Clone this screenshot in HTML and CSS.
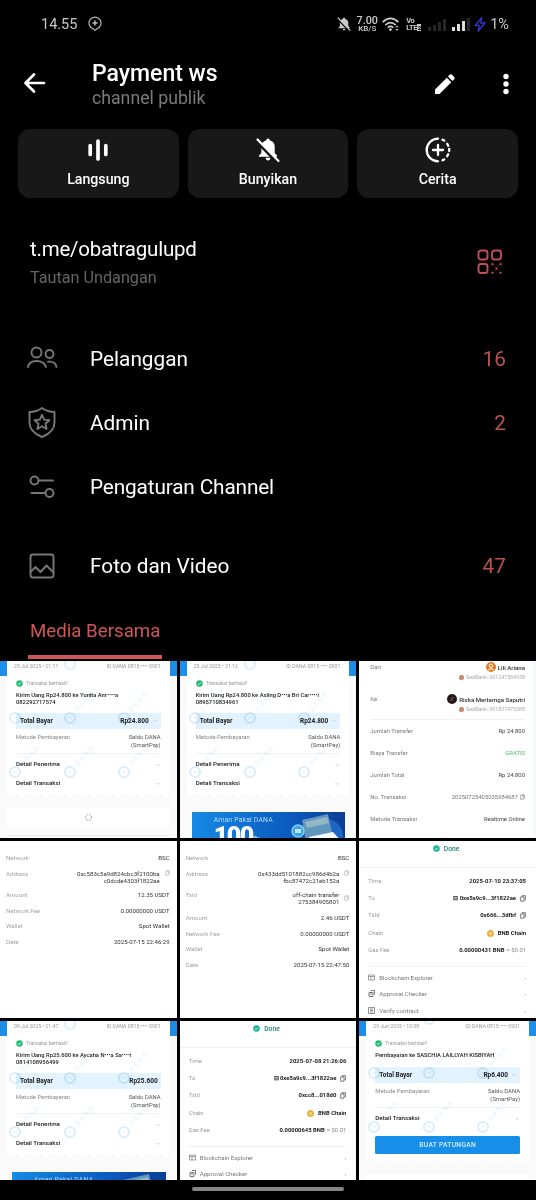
FILE: index.html
```html
<!DOCTYPE html>
<html lang="id">
<head>
<meta charset="utf-8">
<title>Payment ws</title>
<link rel="stylesheet" href="styles.css">
</head>
<body>
<svg width="0" height="0" class="defs">
  <symbol id="chev" viewBox="0 0 6 4"><path d="M1.5 1 3 2.5 4.500 1" fill="none" stroke="#b5c2cc" stroke-width=".7"/></symbol>
  <symbol id="check" viewBox="0 0 8 8"><circle cx="4" cy="4" r="3.700" fill="currentColor"/><path d="M2.300 4.100 3.600 5.300 5.800 2.900" fill="none" stroke="#fff" stroke-width=".9"/></symbol>
  <symbol id="copy" viewBox="0 0 6 7"><path d="M2 1.500V.7h3.400v4.200H4.600M.7 1.900h3.300v4.300H.7z" fill="none" stroke="currentColor" stroke-width=".7"/></symbol>
  <symbol id="wm" viewBox="0 0 54 54"><circle cx="15" cy="42" r="5" fill="none" stroke="#dbeefa" stroke-width="2.200"/><path d="M13 42q2-2 4 0" fill="none" stroke="#dbeefa"/><text x="23" y="36" transform="rotate(-47 23 36)" font-size="7" letter-spacing="1.500" fill="#e4f1fa">DANA</text></symbol>
  <symbol id="wms" viewBox="0 0 177 150"><use href="#wm" x="0" y="15" width="54" height="54"/><use href="#wm" x="55" y="15" width="54" height="54"/><use href="#wm" x="109" y="15" width="54" height="54"/><use href="#wm" x="0" y="69" width="54" height="54"/><use href="#wm" x="55" y="69" width="54" height="54"/><use href="#wm" x="109" y="69" width="54" height="54"/><circle cx="70" cy="3" r="5" fill="none" stroke="#dbeefa" stroke-width="2"/></symbol>
  <symbol id="scallop" viewBox="0 0 163 5"><path d="M0 0h163v2q-3 4-6 0t-6 0-6 0-6 0-6 0-6 0-6 0-6 0-6 0-6 0-6 0-6 0-6 0-6 0-6 0-6 0-6 0-6 0-6 0-6 0-6 0-6 0-6 0-6 0-6 0-6 0-7 0z" fill="#fff" stroke="#eef1f3" stroke-width=".6"/></symbol>
  <symbol id="promo" viewBox="0 0 64 30"><circle cx="45" cy="24" r="17" fill="#1d66c4"/><path d="m21 8 26-6 5 23-27 5z" fill="#6297bd"/><path d="m24 10 22-5 2 6-22 5z" fill="#93b7c7"/><circle cx="17" cy="19" r="6" fill="#3ba4e6" stroke="#83d0f5" stroke-width="1.500"/><path d="M14 17h6v4h-6z" fill="#bce5f8"/><path d="m28 25 24-5 9 10H28z" fill="#f5faff"/></symbol>
</svg>

<header class="status">
  <span class="time">14.55</span>
  <svg class="story" width="14" height="16" viewBox="0 0 14 16" fill="none" stroke="#bbb"><path d="M5.200 12.800A6 6 0 1 1 8.800 12.800L7 14.300z" stroke-width="1.100"/><path d="M7 4.500v5M4.500 7h5" stroke-width="1.500"/></svg>
  <div class="status-icons">
    <svg width="14" height="14" viewBox="0 0 14 14"><path d="M7 .7c.8 0 1.200.5 1.200 1.200 2 .5 3.100 2 3.100 4v3l1.500 1.800v.5H1.500v-.5L2.900 9V6c0-2 1-3.500 2.900-4.100C5.800 1.200 6.200.7 7 .7zM5.600 12h2.900c0 1.700-2.900 1.700-2.900 0z" fill="#c9c9c9"/><path d="M0 1.500 12 14" stroke="#000" stroke-width="1.300"/><path d="M.7.700 13.300 13.600" stroke="#c9c9c9" stroke-width="1.200"/></svg>
    <div class="net"><span>7.00</span><small>KB/S</small></div>
    <svg class="wifi" width="18" height="15" viewBox="0 0 18 15" fill="none" stroke="#d0d0d0" stroke-width="1.700"><path d="M.7 5.200q7.800-7.500 15.600 0M3.300 8q5.200-4.900 10.400 0M5.800 10.600q2.700-2.400 5.400 0"/><path d="m8.500 11 1.700 1.500-1.700 1.800-1.700-1.800z" fill="#d0d0d0" stroke="none"/><path d="m13.200 10.300 1.700-1.700 1.700 1.700zM13.200 12l1.700 1.700 1.700-1.700z" fill="#d0d0d0" stroke="none"/></svg>
    <div class="volte"><span>Vo</span><span>LTE<b>2</b></span></div>
    <svg width="18" height="13" viewBox="0 0 18 13" fill="#272727"><path d="M0 9h3v4H0zM5 7h3v6H5zM10 4h3v9h-3zM15 1h3v12h-3z"/></svg>
    <svg width="18" height="13" viewBox="0 0 18 13" fill="#dedede"><path d="M0 9h3v4H0zM5 6h3v7H5zM10 3h3v10h-3z"/><path d="M15 0h3v13h-3z" fill="#292929"/></svg>
    <svg class="bolt" width="12" height="15" viewBox="0 0 12 15" fill="none" stroke="#3438c8" stroke-width="1.400"><path d="M7.500 1 1.200 8.400h3.900L4.300 14l6.500-8H6.900z"/></svg>
    <span class="pct">1%</span>
  </div>
</header>

<nav class="topbar">
  <svg class="back" width="24" height="24" viewBox="0 0 24 24" fill="none" stroke="#fff" stroke-width="2.700" stroke-linecap="round" stroke-linejoin="round"><path d="M21 12H3M11 3.500 2.500 12l8.500 8.500"/></svg>
  <div class="heading"><h1>Payment ws</h1><p>channel publik</p></div>
  <svg class="edit" width="22" height="22" viewBox="0 0 22 22" fill="#fff"><path d="M1 16.500 12.800 4.700l4.500 4.500L5.500 21H1zM14 3.500l1.600-1.700q1.200-1.100 2.400 0l2.200 2.200q1.100 1.200 0 2.300l-1.700 1.700z"/></svg>
  <svg class="dots" width="6" height="22" viewBox="0 0 6 22" fill="#fff"><circle cx="3" cy="3.500" r="2.700"/><circle cx="3" cy="11" r="2.700"/><circle cx="3" cy="18.500" r="2.700"/></svg>
</nav>

<section class="actions">
  <div class="action"><svg width="28" height="28" viewBox="0 0 28 28" stroke="#fff" stroke-width="3.700" stroke-linecap="round"><path d="M6.200 9.500v9M14 5v18M21.800 9.500v9"/></svg><span>Langsung</span></div>
  <div class="action"><svg width="28" height="28" viewBox="0 0 28 28"><path d="M14 2.500c1.200 0 1.700.8 1.700 1.700 3.300.8 5 3.300 5 6.500v6.200l2.400 2.500v1.300H5v-1.300l2.400-2.500v-6.200c0-3.200 1.700-5.700 5-6.500 0-.9.500-1.700 1.600-1.700zM11.700 21.800h4.700c0 3.500-4.700 3.500-4.700 0z" fill="#fff"/><path d="M2.500 5.500 23.500 27" stroke="#181818" stroke-width="2.600"/><path d="M3.500 3.500 24.500 25" stroke="#fff" stroke-width="2.200" stroke-linecap="round"/></svg><span>Bunyikan</span></div>
  <div class="action"><svg width="28" height="28" viewBox="0 0 28 28" fill="none" stroke="#fff" stroke-width="2.300" stroke-linecap="round"><path d="M14 2.700A11.300 11.300 0 0 0 14 25.300M18.500 3.700 20.200 4.600M23.200 7.800l1 2M25.200 13v2.100M24.200 18.200l-1 2M20.200 23.400l-1.700.9M14 9v10M9 14h10"/></svg><span>Cerita</span></div>
</section>

<section class="link">
  <div><p class="url">t.me/obatragulupd</p><p class="hint">Tautan Undangan</p></div>
  <svg width="26" height="26" viewBox="0 0 26 26" fill="none" stroke="#c64c5b" stroke-width="1.900"><rect x="1.500" y="1.500" width="9" height="9" rx="2.500"/><rect x="15" y="1.500" width="9" height="9" rx="2.500"/><rect x="1.500" y="15" width="9" height="9" rx="2.500"/><path d="M14.500 15.200h2M22.500 15.200h2M18.500 19.500h2M14.500 23.800h2M22.500 23.800h2" stroke-width="2"/><path d="M17.500 17.400h1.200M20.500 17.400h1.200M17.500 21.600h1.200M20.500 21.600h1.200" stroke-width="1" opacity=".5"/></svg>
</section>

<section class="menu">
  <div class="item"><svg width="32" height="32" viewBox="0 0 32 32"><circle cx="10.500" cy="9.500" r="5"/><circle cx="23.500" cy="11" r="4"/><path d="M2 24q1-6 8.500-6t9.500 6M22 18.800q7.500-1 8.500 5.200"/></svg><span>Pelanggan</span><b>16</b></div>
  <div class="item"><svg width="32" height="32" viewBox="0 0 32 32"><path d="M16 1q5.500 4 12.500 4V15.500q0 9.500-12.500 14.500Q3.500 25 3.500 15.500V5q7 0 12.500-4z"/><path d="m16 7.800 2.200 4.800 5.200.6-3.900 3.500 1.100 5.200-4.600-2.700-4.600 2.700 1.100-5.200-3.900-3.500 5.200-.6z"/></svg><span>Admin</span><b>2</b></div>
  <div class="item"><svg width="32" height="32" viewBox="0 0 32 32"><circle cx="8.500" cy="9.500" r="4"/><path d="M12.500 9.500H27M5.500 22h14"/><circle cx="23.500" cy="22" r="4"/></svg><span class="tight">Pengaturan Channel</span></div>
  <div class="item media"><svg width="32" height="32" viewBox="0 0 32 32"><rect x="4.500" y="4.500" width="23" height="23" rx="2.500"/><path d="m4.500 22 5-5 5 5 6-6.500 7 7"/></svg><span>Foto dan Video</span><b>47</b></div>
</section>

<div class="tabs"><div class="tab">Media Bersama</div></div>

<main class="grid">
  <article class="cell dana">
    <svg class="marks" width="177" height="150"><use href="#wms"/></svg>
    <div class="sheet">
      <div class="date"><span>25 Jul 2025 • 21:11</span><span>ID DANA 0815 •••• 0901</span></div>
      <div class="ok"><svg width="7" height="7"><use href="#check"/></svg>Transaksi berhasil!</div>
      <div class="desc">Kirim Uang Rp24.800 ke Yunita Anr••••a<br>082292717574</div>
      <div class="total"><span>Total Bayar</span><span>Rp24.800</span><svg width="6" height="4"><use href="#chev"/></svg></div>
      <div class="pay"><span>Metode Pembayaran</span><span>Saldo DANA<br>(SmartPay)</span></div>
      <div class="detail"><span>Detail Penerima</span><svg width="6" height="4"><use href="#chev"/></svg></div>
      <div class="detail"><span>Detail Transaksi</span><svg width="6" height="4"><use href="#chev"/></svg></div>
    </div>
    <svg class="edge" width="163" height="5"><use href="#scallop"/></svg>
    <div class="loader"><svg width="9" height="9" viewBox="0 0 9 9"><circle cx="4.500" cy="4.500" r="3" fill="none" stroke="#b9b9b9" stroke-width="1.200" stroke-dasharray="1.500 .9"/></svg></div>
    <div class="rule"></div>
  </article>

  <article class="cell dana">
    <svg class="marks" width="177" height="150"><use href="#wms"/></svg>
    <div class="sheet">
      <div class="date"><span>25 Jul 2025 • 21:12</span><span>ID DANA 0815 •••• 0901</span></div>
      <div class="ok"><svg width="7" height="7"><use href="#check"/></svg>Transaksi berhasil!</div>
      <div class="desc">Kirim Uang Rp24.800 ke Asling D•••a Bri Car••••i<br>0895710834961</div>
      <div class="total"><span>Total Bayar</span><span>Rp24.800</span><svg width="6" height="4"><use href="#chev"/></svg></div>
      <div class="pay"><span>Metode Pembayaran</span><span>Saldo DANA<br>(SmartPay)</span></div>
      <div class="detail"><span>Detail Penerima</span><svg width="6" height="4"><use href="#chev"/></svg></div>
      <div class="detail"><span>Detail Transaksi</span><svg width="6" height="4"><use href="#chev"/></svg></div>
    </div>
    <svg class="edge" width="163" height="5"><use href="#scallop"/></svg>
    <div class="banner"><div><p>Aman Pakai DANA</p><strong>100<i>%</i></strong></div><svg width="64" height="30"><use href="#promo"/></svg></div>
  </article>

  <article class="cell bank">
    <div class="party"><span>Dari</span><div><p><svg width="10" height="10" viewBox="0 0 10 10"><circle cx="5" cy="5" r="5" fill="#e67b20"/><circle cx="5" cy="3.700" r="1.700" fill="none" stroke="#fff"/><path d="M2.200 8q2.800-3 5.600 0" fill="none" stroke="#fff"/></svg>Lili Ariana</p><small><i></i>SeaBank: 901247584938</small></div></div>
    <div class="party second"><span>Ke</span><div><p><svg width="10" height="10" viewBox="0 0 10 10"><circle cx="5" cy="5" r="5" fill="#261b1c"/><path d="m4 7 2-4" stroke="#9b6e63"/></svg>Riska Mertamga Saputri</p><small><i></i>SeaBank: 901827479388</small></div></div>
    <div class="fact"><span>Jumlah Transfer</span><span>Rp 24.800</span></div>
    <div class="fact"><span>Biaya Transfer</span><span class="free">GRATIS</span></div>
    <div class="fact"><span>Jumlah Total</span><span>Rp 24.800</span></div>
    <div class="fact"><span>No. Transaksi</span><span class="num">20250725405035984687 <svg width="5" height="6"><use href="#copy"/></svg></span></div>
    <div class="fact"><span>Metode Transaksi</span><span>Realtime Online</span></div>
  </article>

  <article class="cell wallet">
    <div class="w"><span>Network</span><span>BSC</span></div>
    <div class="w two"><span>Address</span><span>0xc583c5a9d824cbc3f2100ba<br>c0dcde4303f1822ae</span><svg width="5" height="6"><use href="#copy"/></svg></div>
    <div class="w"><span>Amount</span><span>12.35 USDT</span></div>
    <div class="w"><span>Network Fee</span><span>0.00000000 USDT</span></div>
    <div class="w"><span>Wallet</span><span>Spot Wallet</span></div>
    <div class="w"><span>Date</span><span>2025-07-15 22:46:29</span></div>
  </article>

  <article class="cell wallet">
    <div class="w"><span>Network</span><span>BSC</span></div>
    <div class="w two"><span>Address</span><span>0x433dd5101882cc986d4b2a<br>fbc87472c21eb152a</span><svg width="5" height="6"><use href="#copy"/></svg></div>
    <div class="w two more"><span>Txid</span><span>off-chain transfer<br>275384905801</span><svg width="5" height="6"><use href="#copy"/></svg></div>
    <div class="w"><span>Amount</span><span>2.46 USDT</span></div>
    <div class="w"><span>Network Fee</span><span>0.00000000 USDT</span></div>
    <div class="w"><span>Wallet</span><span>Spot Wallet</span></div>
    <div class="w"><span>Date</span><span>2025-07-15 22:47:50</span></div>
  </article>

  <article class="cell chain">
    <div class="done"><svg width="7" height="7"><use href="#check"/></svg>Done</div>
    <div class="c"><span>Time</span><b>2025-07-10 23:37:05</b></div>
    <div class="c"><span>To</span><b>⊟ 0xe5a9c9...3f1822ae</b><svg width="6" height="7"><use href="#copy"/></svg></div>
    <div class="c"><span>TxId</span><b>0x666...3dfbf</b><svg width="6" height="7"><use href="#copy"/></svg></div>
    <div class="c"><span>Chain</span><b><i class="coin"></i>BNB Chain</b></div>
    <div class="c gas"><span>Gas Fee</span><b>0.00000431 BNB <em>≈ $0.01</em></b></div>
    <div class="tools">
      <div><svg width="7" height="7" viewBox="0 0 7 7"><path d="M.5 1h6v5h-6zM.5 2.500h6M3 2.500V6" fill="none" stroke="#888" stroke-width=".8"/></svg>Blockchain Explorer<em>›</em></div>
      <div><svg width="7" height="7" viewBox="0 0 7 7"><path d="M1 2.500h4v4H1zM3 .5h3.500v4M2 4h2" fill="none" stroke="#777"/></svg>Approval Checker<em>›</em></div>
      <div><svg width="7" height="7" viewBox="0 0 7 7"><path d="M.5.500h6v6h-6zM2 2h3M2 3.500h3M2 5h3" fill="none" stroke="#777" stroke-width=".8"/></svg>Verify contract<em>›</em></div>
    </div>
  </article>

  <article class="cell dana">
    <svg class="marks" width="177" height="150"><use href="#wms"/></svg>
    <div class="sheet">
      <div class="date"><span>09 Jul 2025 • 21:47</span><span>ID DANA 0815 •••• 0901</span></div>
      <div class="ok"><svg width="7" height="7"><use href="#check"/></svg>Transaksi berhasil!</div>
      <div class="desc">Kirim Uang Rp25.600 ke Aycaha N•••a Sa••••i<br>0814108956499</div>
      <div class="total"><span>Total Bayar</span><span>Rp25.600</span></div>
      <div class="pay"><span>Metode Pembayaran</span><span>Saldo DANA<br>(SmartPay)</span></div>
      <div class="detail"><span>Detail Penerima</span><svg width="6" height="4"><use href="#chev"/></svg></div>
      <div class="detail"><span>Detail Transaksi</span><svg width="6" height="4"><use href="#chev"/></svg></div>
    </div>
    <svg class="edge" width="163" height="5"><use href="#scallop"/></svg>
    <div class="banner"><div><p>Aman Pakai DANA</p></div><svg width="64" height="30"><use href="#promo"/></svg></div>
  </article>

  <article class="cell chain">
    <div class="done"><svg width="7" height="7"><use href="#check"/></svg>Done</div>
    <div class="c"><span>Time</span><b>2025-07-08 21:26:06</b></div>
    <div class="c"><span>To</span><b>⊟ 0xe5a9c9...3f1822ae</b><svg width="6" height="7"><use href="#copy"/></svg></div>
    <div class="c"><span>TxId</span><b>0xcc8...018d0</b><svg width="6" height="7"><use href="#copy"/></svg></div>
    <div class="c"><span>Chain</span><b><i class="coin"></i>BNB Chain</b></div>
    <div class="c gas"><span>Gas Fee</span><b>0.00000645 BNB <em>≈ $0.01</em></b></div>
    <div class="tools">
      <div><svg width="7" height="7" viewBox="0 0 7 7"><path d="M.5 1h6v5h-6zM.5 2.500h6M3 2.500V6" fill="none" stroke="#888" stroke-width=".8"/></svg>Blockchain Explorer<em>›</em></div>
      <div><svg width="7" height="7" viewBox="0 0 7 7"><path d="M1 2.500h4v4H1zM3 .5h3.500v4M2 4h2" fill="none" stroke="#777"/></svg>Approval Checker<em>›</em></div>
    </div>
  </article>

  <article class="cell dana">
    <svg class="marks raised" width="177" height="150"><use href="#wms"/></svg>
    <div class="sheet short">
      <div class="date"><span>29 Jun 2025 • 10:08</span><span>ID DANA 0815 •••• 0901</span></div>
      <div class="ok"><svg width="7" height="7"><use href="#check"/></svg>Transaksi berhasil!</div>
      <div class="desc one">Pembayaran ke SASCHIA LAILLYAH KISBIYAH</div>
      <div class="total"><span>Total Bayar</span><span>Rp6.400</span><svg width="6" height="4"><use href="#chev"/></svg></div>
      <div class="pay"><span>Metode Pembayaran</span><span>Saldo DANA<br>(SmartPay)</span></div>
      <div class="detail"><span>Detail Transaksi</span><svg width="6" height="4"><use href="#chev"/></svg></div>
      <div class="split">BUAT PATUNGAN</div>
    </div>
    <svg class="edge" width="163" height="5"><use href="#scallop"/></svg>
    <div class="loader"><svg width="9" height="9" viewBox="0 0 9 9"><path d="M3 1.500q3-.5 4 3" fill="none" stroke="#aaa"/></svg></div>
  </article>
</main>
<footer class="gesture"><i></i></footer>
</body>
</html>
```
FILE: styles.css
```css
* { box-sizing: border-box; }
html, body { margin: 0; background: #000; }
body { width: 536px; height: 1200px; overflow: hidden; display: flex; flex-direction: column; font-family: Roboto, "Liberation Sans", sans-serif; color: #fff; }
p, h1 { margin: 0; font-weight: 400; }
svg { flex: none; display: block; }
.defs { position: absolute; }

/* Status bar */
.status { height: 48px; display: flex; align-items: center; padding: 0 27px 0 41px; color: #c9c9c9; font-size: 14.500px; flex: none; }
.story { margin-left: 11px; }
.status-icons { margin-left: auto; display: flex; align-items: center; gap: 6px; }
.net { width: 22px; margin: 0 -2px 0 -1px; display: flex; flex-direction: column; align-items: center; font-size: 10.800px; line-height: 9px; font-weight: 500; }
.net small { font-size: 8px; line-height: 7px; font-weight: 500; }
.volte { width: 17px; margin-right: -1px; display: flex; flex-direction: column; font-size: 7.400px; line-height: 7px; font-weight: 700; }
.volte span { display: flex; letter-spacing: -.3px; }
.volte b { background: #c9c9c9; color: #000; font-size: 6px; line-height: 7px; padding: 0 .5px; }
.bolt { margin: 0 -2px; }

/* Title bar */
.topbar { height: 81px; flex: none; display: flex; align-items: flex-start; padding: 12px 27px 0 23px; }
.back { margin-top: 11px; }
.heading { margin-left: 45px; }
.heading h1 { font-size: 23px; line-height: 27px; font-weight: 500; }
.heading p { font-size: 17.700px; line-height: 23px; color: #7b7b7b; }
.edit { margin: 13px 47px 0 auto; }
.dots { margin-top: 13px; }

/* Quick actions */
.actions { display: grid; grid-template-columns: repeat(3, 1fr); gap: 9px; padding: 0 18px; flex: none; }
.action { height: 69px; border-radius: 12px; background: #181818; display: flex; flex-direction: column; align-items: center; padding-top: 7px; gap: 6px; font-size: 14.200px; line-height: 18px; font-weight: 500; }

/* Invite link */
.link { height: 129px; flex: none; display: flex; justify-content: space-between; align-items: flex-start; padding: 37px 33px 0 30px; }
.link svg { margin-top: 14px; }
.url { font-size: 20.500px; line-height: 28px; letter-spacing: -.22px; }
.hint { font-size: 16.200px; line-height: 24px; margin-top: 3px; color: #656565; }

/* Menu */
.menu { flex: none; }
.item { height: 64px; display: flex; align-items: center; padding: 0 30px 0 26px; font-size: 20.800px; }
.item svg { fill: none; stroke: #777; stroke-width: 1.900; stroke-linejoin: round; stroke-linecap: round; }
.item span { margin-left: 32px; }
.item .tight { letter-spacing: -.15px; }
.item b { margin-left: auto; font-weight: 400; color: #b9534e; }
.item.media { margin-top: 15px; }

.tabs { height: 63px; flex: none; padding: 20px 28px 0; display: flex; }
.tab { width: 134px; height: 41px; padding: 0 2px; border-bottom: 4px solid #cf5557; border-radius: 3px 3px 0 0; color: #cf5557; font-size: 18.700px; line-height: 26px; white-space: nowrap; }

/* Shared media */
.grid { height: 519px; flex: none; display: grid; grid-template-columns: repeat(3, 1fr); grid-template-rows: 177px 177px 159px; gap: 3px; overflow: hidden; }
.cell { position: relative; background: #fff; color: #333; overflow: hidden; min-width: 0; font-size: 6px; line-height: 7px; white-space: nowrap; }

.dana { background: linear-gradient(#1c8ee9 15px, #fafafa 15px); padding: 0 7px; color: #222; }
.marks { position: absolute; left: 0; top: 0; z-index: 1; mix-blend-mode: multiply; }
.marks.raised { top: -5px; }
.sheet { background: #fff; height: 134px; padding: 0 9px; }
.sheet.short { height: 140px; }
.date { height: 11px; display: flex; justify-content: space-between; align-items: center; color: #999; font-size: 5.200px; margin: 0 0 0 -2px; }
.ok { height: 23px; display: flex; align-items: center; gap: 3px; color: #999; font-size: 5px; padding-bottom: 1px; }
.ok svg { color: #20bd71; }
.desc { height: 18px; font-weight: 500; font-size: 5.800px; line-height: 6.500px; margin-top: -3px; }
.desc.one { height: 12px; }
.total { height: 16px; margin: 3px 0 0; background: #e2f2fe; display: flex; align-items: center; padding: 0 3px 0 4px; font-weight: 700; font-size: 6.500px; }
.total span:nth-child(2) { margin-left: auto; }
.total svg { margin-left: 3px; }
.pay { height: 25px; display: flex; justify-content: space-between; padding-top: 5px; border-bottom: 1px solid #eef1f3; color: #888; font-size: 5.900px; line-height: 7.500px; text-align: right; }
.pay span + span { color: #555; }
.detail { height: 19px; margin-top: 1px; margin-bottom: -1px; display: flex; align-items: center; justify-content: space-between; font-weight: 500; font-size: 6.200px; }
.edge { margin-bottom: 8px; }
.loader { height: 19px; background: #fff; display: flex; align-items: center; justify-content: center; }
.rule { margin: 8px 0; border-top: 1px solid #e8ecee; }
.split { height: 18px; margin-top: 9px; border-radius: 1.500px; background: #178fe9; color: #d9efff; display: flex; align-items: center; justify-content: center; font-size: 6.700px; font-weight: 500; letter-spacing: .3px; }
.banner { height: 40px; margin: 12px 4px 0 5px; background: linear-gradient(90deg, #168ae4, #0b59bd 65%, #0a3e94); display: flex; justify-content: space-between; color: #fff; overflow: hidden; }
.banner div { padding: 4px 0 0 22px; }
.banner p { font-size: 6.800px; line-height: 9px; color: #b4defb; letter-spacing: .2px; }
.banner strong { display: block; font-size: 25px; line-height: 22px; font-weight: 900; letter-spacing: -1.500px; margin-top: 1px; }
.banner i { font-size: 12px; font-style: normal; color: #aee0ff; }

.bank { border-right: 3px solid #f6f8f9; padding: 0 8px 0 11px; }
.party { height: 32px; display: flex; justify-content: space-between; color: #777; padding-top: 2px; }
.party.second { height: 27px; border-bottom: 1px solid #f1f1f1; }
.party div { text-align: right; margin-top: -1px; }
.party p { display: flex; align-items: center; justify-content: flex-end; gap: 2px; height: 10px; color: #333; font-size: 6.100px; font-weight: 500; }
.party small { display: flex; align-items: center; justify-content: flex-end; gap: 2px; font-size: 5.300px; line-height: 10px; color: #aaa; }
.party i { width: 5px; height: 5px; border-radius: 2px; background: #cc8c66; }
.fact { height: 22px; display: flex; justify-content: space-between; align-items: center; font-size: 5.900px; color: #777; }
.fact span + span { color: #444; }
.fact span.free { color: #52b96c; }
.fact span.num { display: flex; gap: 2px; color: #777; font-size: 5.900px; }

.wallet { padding: 9px 7px 0 6px; color: #333; }
.w { height: 15.600px; display: flex; justify-content: space-between; padding-top: 4px; font-size: 6.100px; line-height: 7.500px; }
.w span:first-child { color: #a3a3a3; }
.w span:nth-child(2) { text-align: right; margin-left: auto; }
.w.two { height: 21.400px; }
.w.two.more { height: 23px; }
.w svg { margin: 0 0 0 5px; color: #aaa; }
.w.more svg { margin-top: 4px; }

.chain { padding: 0 10px 0 9px; color: #333; }
.done { height: 27px; display: flex; justify-content: center; gap: 4px; padding: 4px 3px 0 0; color: #24827e; font-size: 6.800px; line-height: 8px; font-weight: 500; border-bottom: 1px solid #f2f2f2; margin: 0 -10px 5px -9px; }
.done svg { color: #18b69b; }
.c { height: 17.200px; display: flex; align-items: center; font-size: 5.900px; color: #999; }
.c b { margin-left: auto; color: #222; display: flex; align-items: center; font-weight: 700; }
.c svg { margin-left: 4px; color: #444; }
.c em { font-style: normal; font-weight: 400; color: #888; margin-left: 2px; }
.coin { width: 7px; height: 7px; border-radius: 50%; background: #f5d48c; border: 2px solid #e8b23f; margin-right: 4px; }
.tools { border-top: 1px solid #f0f0f0; margin-top: 7px; padding-top: 2px; color: #777; }
.tools div { height: 16.500px; display: flex; align-items: center; gap: 4px; font-size: 6.100px; }
.tools em { margin-left: auto; font-style: normal; color: #aaa; }

.gesture { height: 20px; display: flex; justify-content: center; padding-top: 7px; }
.gesture i { width: 152px; height: 4px; border-radius: 2px; background: #858585; }
```
